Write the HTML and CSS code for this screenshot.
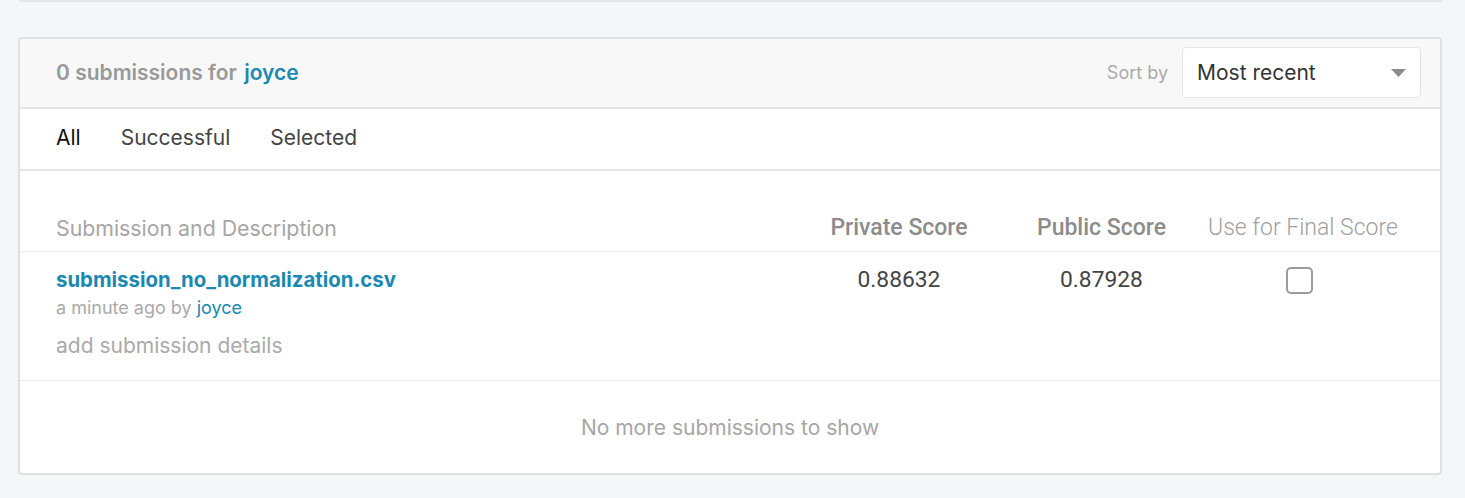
FILE: index.html
```html
<!DOCTYPE html>
<html>
<head>
<meta charset="utf-8">
<link rel="stylesheet" href="styles.css">
</head>
<body>
<div class="prev-card"></div>
<section class="card">
  <header class="card-head">
    <div class="count">0 submissions for <a class="user">joyce</a></div>
    <div class="sort">
      <span class="sort-label">Sort by</span>
      <div class="select">
        <span>Most recent</span>
        <svg class="caret" width="15" height="8" viewBox="0 0 15 8"><path d="M0 0 H15 L7.5 8 Z" fill="#8c8c8c"/></svg>
      </div>
    </div>
  </header>
  <nav class="tabs">
    <span class="tab active">All</span>
    <span class="tab">Successful</span>
    <span class="tab">Selected</span>
  </nav>
  <div class="table">
    <div class="thead">
      <div class="th desc">Submission and Description</div>
      <div class="th score">Private Score</div>
      <div class="th score">Public Score</div>
      <div class="th final">Use for Final Score</div>
    </div>
    <div class="trow">
      <div class="td desc">
        <a class="file">submission_no_normalization.csv</a>
        <div class="meta">a minute ago by <a class="by">joyce</a></div>
        <div class="details">add submission details</div>
      </div>
      <div class="td num">0.88632</div>
      <div class="td num">0.87928</div>
      <div class="td check"><span class="box"></span></div>
    </div>
  </div>
  <footer class="card-foot">No more submissions to show</footer>
</section>
</body>
</html>
```
FILE: styles.css
```css
html, body {
  margin: 0;
  padding: 0;
  background: #f4f6f7;
  font-family: "Inter", "Liberation Sans", sans-serif;
}

.prev-card {
  margin-left: 19px;
  width: 1423px;
  height: 0;
  border: 2px solid #e3e5e6;
  border-top: none;
  border-radius: 0 0 4px 4px;
  box-sizing: border-box;
}

.card {
  margin: 35px 0 0 18px;
  width: 1424px;
  box-sizing: border-box;
  border: 2px solid #dfe0e1;
  border-radius: 4px;
  background: #fff;
}

.card-head {
  height: 70px;
  box-sizing: border-box;
  padding: 0 19px 1px 36px;
  background: #f8f8f8;
  border-bottom: 2px solid #e4e4e4;
  border-radius: 3px 3px 0 0;
  display: flex;
  align-items: center;
  justify-content: space-between;
}

.count {
  font-size: 21px;
  font-weight: 600;
  color: #999;
}

.user, .file, .by {
  color: #1a89b3;
  text-decoration: none;
}

.count .user {
  margin-left: 2px;
}

.sort {
  display: flex;
  align-items: center;
  gap: 14px;
}

.sort-label {
  font-size: 18px;
  color: #aaa;
}

.select {
  width: 239px;
  height: 51px;
  box-sizing: border-box;
  background: #fff;
  border: 1px solid #e6e6e6;
  border-radius: 4px;
  display: flex;
  align-items: center;
  justify-content: space-between;
  padding: 0 14px 0 14px;
  font-size: 21px;
  color: #333;
}

.caret {
  display: block;
}

.tabs {
  height: 62px;
  box-sizing: border-box;
  padding: 0 0 3px 36px;
  border-bottom: 2px solid #e4e4e4;
  display: flex;
  align-items: center;
  gap: 40px;
  font-size: 21px;
  color: #444;
}

.tab.active {
  color: #111;
}

.thead, .trow {
  display: grid;
  grid-template-columns: 1fr 192px 213px 190px;
  padding: 0 42px 0 36px;
}

.thead {
  padding-top: 44px;
  padding-bottom: 10px;
  border-bottom: 1px solid #efefef;
  line-height: 26px;
  font-size: 21.3px;
}

.th.desc {
  color: #a6a6a6;
}

.th.score {
  text-align: center;
  font-family: "Roboto", "Liberation Sans", sans-serif;
  font-weight: 500;
  font-size: 23px;
  color: #8c8c8c;
}

.th.final {
  text-align: center;
  font-family: "Roboto", "Liberation Sans", sans-serif;
  font-weight: 300;
  font-size: 23px;
  color: #a0a0a0;
}

.trow {
  padding-top: 15px;
  padding-bottom: 21px;
  border-bottom: 1px solid #eeeeee;
}

.file {
  display: block;
  font-size: 20.4px;
  font-weight: 700;
  line-height: 26px;
}

.meta {
  margin-top: 3px;
  font-size: 18px;
  line-height: 24px;
  color: #aaa;
}

.details {
  margin-top: 13px;
  font-size: 21px;
  line-height: 26px;
  color: #aaa;
}

.td.num {
  text-align: center;
  font-family: "Roboto", "Liberation Sans", sans-serif;
  font-size: 22.8px;
  line-height: 26px;
  color: #444;
}

.td.check {
  display: flex;
  justify-content: center;
  padding-right: 7px;
}

.box {
  display: block;
  width: 27px;
  height: 27px;
  box-sizing: border-box;
  border: 2px solid #9c9c9c;
  border-radius: 5px;
}

.card-foot {
  height: 92px;
  display: flex;
  align-items: center;
  justify-content: center;
  font-size: 21px;
  color: #a6a6a6;
}
```
